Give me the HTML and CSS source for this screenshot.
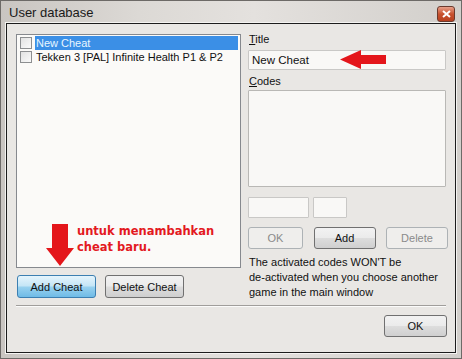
FILE: index.html
```html
<!DOCTYPE html>
<html lang="en">
<head>
    <meta charset="UTF-8">
    <title>User database</title>
    <link rel="stylesheet" href="styles.css">
</head>
<body>
    <div class="window">
        <div class="titlebar">
            <span class="caption">User database</span>
            <span class="close">
                <svg width="9" height="8" viewBox="0 0 9 8"><path d="M1 1 L8 7 M8 1 L1 7" stroke="#fff" stroke-width="2"/></svg>
            </span>
        </div>
        <div class="client">
            <div class="main">
                <div class="left">
                    <div class="list">
                        <div class="item selected"><span class="check"></span><span class="label">New Cheat</span></div>
                        <div class="item"><span class="check"></span><span class="label">Tekken 3 [PAL] Infinite Health P1 &amp; P2</span></div>
                    </div>
                    <div class="btns">
                        <button class="btn default wide">Add Cheat</button>
                        <button class="btn wide">Delete Cheat</button>
                    </div>
                </div>
                <div class="right">
                    <label class="lbl"><u>T</u>itle</label>
                    <div class="field title-field">New Cheat</div>
                    <label class="lbl"><u>C</u>odes</label>
                    <div class="field codes"></div>
                    <div class="small-row">
                        <div class="field small a"></div>
                        <div class="field small b"></div>
                    </div>
                    <div class="code-btns">
                        <button class="btn disabled">OK</button>
                        <button class="btn">Add</button>
                        <button class="btn disabled">Delete</button>
                    </div>
                    <p class="note">The activated codes WON'T be<br>de-activated when you choose another<br>game in the main window</p>
                </div>
            </div>
            <div class="sep"></div>
            <div class="footer">
                <button class="btn ok">OK</button>
            </div>

            <svg class="arrow-left" width="46" height="19" viewBox="0 0 46 19">
                <path d="M0 9.5 L21 0 L21 5 L46 5 L46 14 L21 14 L21 19 Z" fill="#e4161b"/>
            </svg>
            <svg class="arrow-down" width="28" height="42" viewBox="0 0 28 42">
                <path d="M6 0 L22 0 L22 24 L28 24 L14 42 L0 24 L6 24 Z" fill="#e4161b"/>
            </svg>
            <div class="note-red">untuk menambahkan<br>cheat baru.</div>
        </div>
    </div>
</body>
</html>
```

FILE: styles.css
```css
* {
    box-sizing: border-box;
}

body {
    margin: 0;
    font-family: "Liberation Sans", Arial, sans-serif;
    font-size: 11px;
    color: #111;
}

.window {
    width: 462px;
    height: 359px;
    background: linear-gradient(90deg, #c9c5c1 0%, #dcd9d5 30%, #e4e1de 55%, #d2cfcb 100%);
    border: 1px solid #6d6a67;
    display: flex;
    flex-direction: column;
    padding: 0 5px 5px 5px;
}

.titlebar {
    height: 22px;
    display: flex;
    align-items: center;
    justify-content: space-between;
    padding-left: 3px;
}

.caption {
    font-family: "Liberation Sans", Arial, sans-serif;
    font-size: 13px;
    color: #1a1a1a;
    padding-top: 1px;
}

.close {
    width: 18px;
    height: 16px;
    margin-right: 1px;
    margin-top: 3px;
    border: 1px solid #6b3a2d;
    border-radius: 3px;
    background: linear-gradient(#e8a08a, #c8522f 50%, #b8401f);
    display: flex;
    align-items: center;
    justify-content: center;
}

.client {
    position: relative;
    flex: 1;
    background: #e9e7e4;
    border: 1px solid #1c1c1c;
    outline: 1px solid #f4f3f1;
    padding: 9px 8px 0 9px;
    display: flex;
    flex-direction: column;
}

.main {
    display: flex;
    gap: 7px;
}

.left {
    width: 225px;
    display: flex;
    flex-direction: column;
    padding-top: 1px;
}

.list {
    height: 234px;
    background: #fbfaf8;
    border: 1px solid #86898e;
    padding: 1px 2px 0 3px;
}

.item {
    height: 14px;
    display: flex;
    align-items: center;
    gap: 3px;
    white-space: nowrap;
}

.check {
    width: 12px;
    height: 12px;
    border: 1px solid #8d8f91;
    background: linear-gradient(135deg, #e2e2e2, #fafafa);
}

.label {
    flex: 1;
    height: 14px;
    line-height: 14px;
    padding-left: 1px;
}

.item.selected .label {
    background: #3b8fe6;
    color: #e8f6ff;
}

.btns {
    display: flex;
    gap: 9px;
    margin-top: 7px;
    padding-left: 1px;
}

.btn {
    font-family: "Liberation Sans", Arial, sans-serif;
    font-size: 11px;
    color: #111;
    height: 23px;
    width: 62px;
    border: 1px solid #707070;
    border-radius: 3px;
    background: linear-gradient(#f2f2f2 0%, #ebebeb 48%, #dddddd 52%, #cfcfcf 100%);
    padding: 0;
}

.btn.wide {
    width: 79px;
}

.btn.default {
    border-color: #3c7fb1;
    background: linear-gradient(#e5f4fc 0%, #c4e5f6 48%, #98d1ef 52%, #6fbbe6 100%);
}

.btn.disabled {
    color: #8a8a8a;
    border-color: #adb2b5;
    background: #efeeec;
}

.right {
    width: 198px;
    display: flex;
    flex-direction: column;
}

.lbl {
    height: 15px;
    line-height: 13px;
    padding-left: 1px;
}

.field {
    background: #f9f8f6;
    border: 1px solid #c9c8c6;
    border-radius: 1px;
}

.title-field {
    height: 20px;
    line-height: 18px;
    padding-left: 3px;
    margin-bottom: 5px;
    margin-top: 2px;
    font-size: 11.5px;
}

.codes {
    height: 97px;
    border-color: #b9b8b5;
}

.small-row {
    display: flex;
    gap: 4px;
    margin-top: 10px;
}

.small.a {
    width: 61px;
    height: 21px;
}

.small.b {
    width: 34px;
    height: 21px;
}

.code-btns {
    display: flex;
    justify-content: space-between;
    margin-top: 9px;
    margin-right: -2px;
}

.code-btns .btn {
    width: 55px;
    height: 22px;
}

.code-btns .btn:nth-child(2),
.code-btns .btn:nth-child(3) {
    width: 62px;
}

.note {
    margin: 6px 0 0 1px;
    line-height: 15px;
    white-space: nowrap;
}

.sep {
    margin-top: 5px;
    height: 2px;
    border-top: 1px solid #a09e9b;
    border-bottom: 1px solid #fbfbfa;
    margin-right: 1px;
}

.footer {
    display: flex;
    justify-content: flex-end;
    margin-top: 8px;
}

.btn.ok {
    width: 63px;
    height: 22px;
}

.arrow-left {
    position: absolute;
    left: 333px;
    top: 26px;
}

.arrow-down {
    position: absolute;
    left: 39px;
    top: 200px;
}

.note-red {
    position: absolute;
    left: 70px;
    top: 199px;
    color: #e3191f;
    font-family: "DejaVu Sans", sans-serif;
    font-weight: bold;
    font-size: 11.5px;
    line-height: 16px;
}
```
